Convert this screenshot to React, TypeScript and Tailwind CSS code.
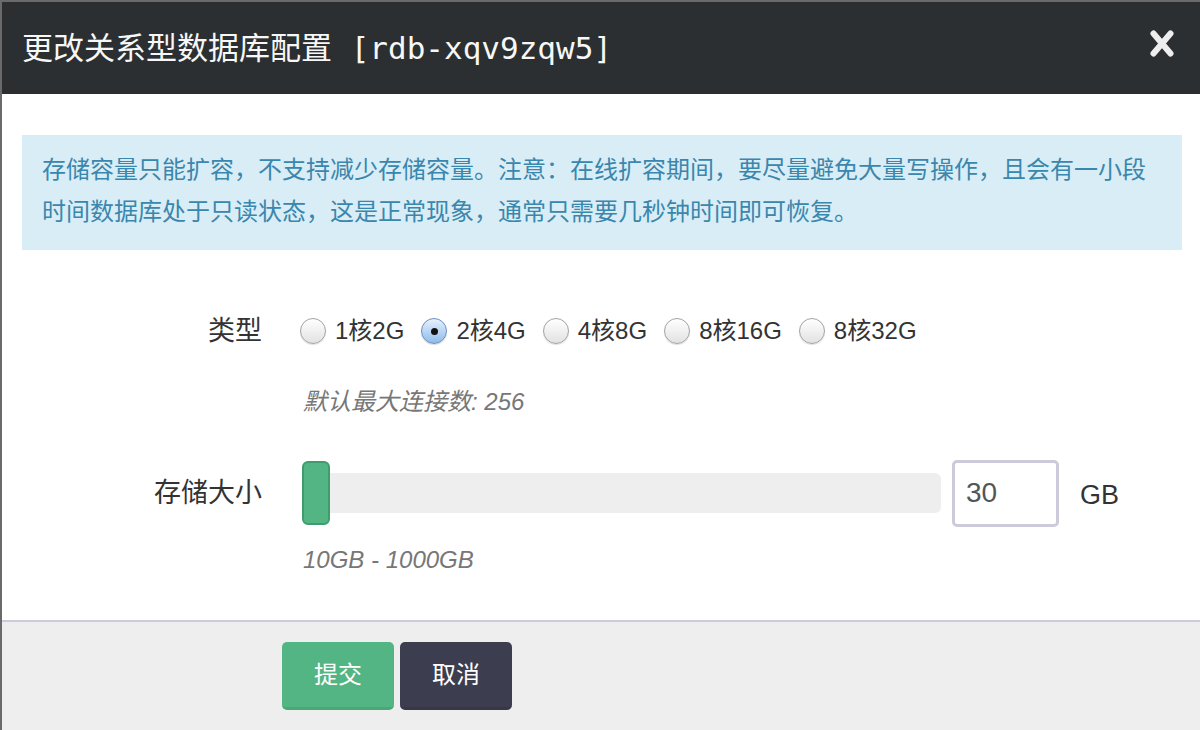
import React from "react";

const sans = '"Liberation Sans", "Noto Sans CJK SC", sans-serif';
const mono = '"DejaVu Sans Mono", "Noto Sans CJK SC", monospace';

const options = ["1核2G", "2核4G", "4核8G", "8核16G", "8核32G"];

function Radio({ checked, label }: { checked: boolean; label: string }) {
  return (
    <div className="flex items-center mr-[17px]">
      {checked ? (
        <div className="w-[26px] h-[26px] rounded-full border border-[#6d8fbf] bg-linear-to-b from-[#e6f1fc] to-[#8fbbea] flex items-center justify-center shadow-[0_1px_1px_rgba(0,0,0,0.15)]">
          <div className="w-[7px] h-[7px] rounded-full bg-[#111]" />
        </div>
      ) : (
        <div className="w-[26px] h-[26px] rounded-full border border-[#a3a3a3] bg-linear-to-b from-[#ffffff] to-[#e2e2e2] shadow-[0_1px_1px_rgba(0,0,0,0.12)]" />
      )}
      <span className="ml-[9px] text-[24px] leading-[30px] text-[#333]">{label}</span>
    </div>
  );
}

export default function App() {
  return (
    <div
      className="w-[1200px] h-[730px] bg-[#6a6a6a] flex flex-col overflow-hidden"
      style={{ fontFamily: sans }}
    >
      <div className="ml-[2px] mt-[2px] flex-1 flex flex-col bg-white">
        {/* Header */}
        <div className="h-[92px] bg-[#2b2f31] flex items-center justify-between pl-[20px] pr-[26px]">
          <div
            className="text-[31px] leading-[40px] text-[#f7f7f7]"
            style={{ fontFamily: mono }}
          >
            更改关系型数据库配置 [rdb-xqv9zqw5]
          </div>
          <svg width="24" height="27" viewBox="0 0 24 27" className="mb-[10px]">
            <path
              d="M3.5 3.5 L20.5 23.5 M20.5 3.5 L3.5 23.5"
              stroke="#eeeeee"
              strokeWidth="6"
              strokeLinecap="round"
              fill="none"
            />
          </svg>
        </div>

        {/* Body */}
        <div className="flex-1 flex flex-col">
          <div className="mt-[41px] ml-[20px] mr-[18px] bg-[#d9edf7] pl-[20px] pr-[20px] pt-[14px] pb-[17px] text-[24px] leading-[42px] text-[#3a87ad]">
            <div>存储容量只能扩容，不支持减少存储容量。注意：在线扩容期间，要尽量避免大量写操作，且会有一小段</div>
            <div>时间数据库处于只读状态，这是正常现象，通常只需要几秒钟时间即可恢复。</div>
          </div>

          {/* Type row */}
          <div className="mt-[61px] flex items-center h-[40px]">
            <div className="w-[260px] text-right text-[27px] text-[#333] leading-[40px]">类型</div>
            <div className="ml-[38px] flex items-center">
              {options.map((o, i) => (
                <Radio key={o} label={o} checked={i === 1} />
              ))}
            </div>
          </div>

          <div className="mt-[36px] ml-[301px] h-[30px] leading-[30px] text-[24px] italic text-[#777]">
            默认最大连接数: 256
          </div>

          {/* Storage row */}
          <div className="mt-[42px] flex items-center h-[68px]">
            <div className="w-[260px] text-right text-[27px] text-[#333] leading-[40px]">存储大小</div>
            <div className="ml-[41px] relative w-[638px] h-[40px] rounded-[6px] bg-[#eeeeee]">
              <div className="absolute left-[-1px] top-[-12px] w-[28px] h-[64px] rounded-[6px] bg-[#53b583] border-2 border-[#3f9d6d]" />
            </div>
            <div className="ml-[11px] w-[107px] h-[67px] border-[3px] border-[#cdcbdb] rounded-[5px] flex items-center pl-[11px] text-[28px] text-[#555]">
              30
            </div>
            <div className="ml-[21px] text-[27px] text-[#333] mt-[4px]">GB</div>
          </div>

          <div className="mt-[18px] ml-[301px] h-[30px] leading-[30px] text-[24px] italic text-[#777]">
            10GB - 1000GB
          </div>
        </div>

        {/* Footer */}
        <div className="h-[110px] border-t-2 border-[#cdcbdb] bg-[#eeeeee] pt-[20px] flex items-start pl-[280px] gap-[6px]">
          <button className="w-[112px] h-[68px] rounded-[5px] bg-[#53b583] border-b-[3px] border-[#4aa877] text-white text-[24px] flex items-center justify-center">
            提交
          </button>
          <button className="w-[112px] h-[68px] rounded-[5px] bg-[#3c3e4f] border-b-[3px] border-[#363847] text-white text-[24px] flex items-center justify-center">
            取消
          </button>
        </div>
      </div>
    </div>
  );
}
